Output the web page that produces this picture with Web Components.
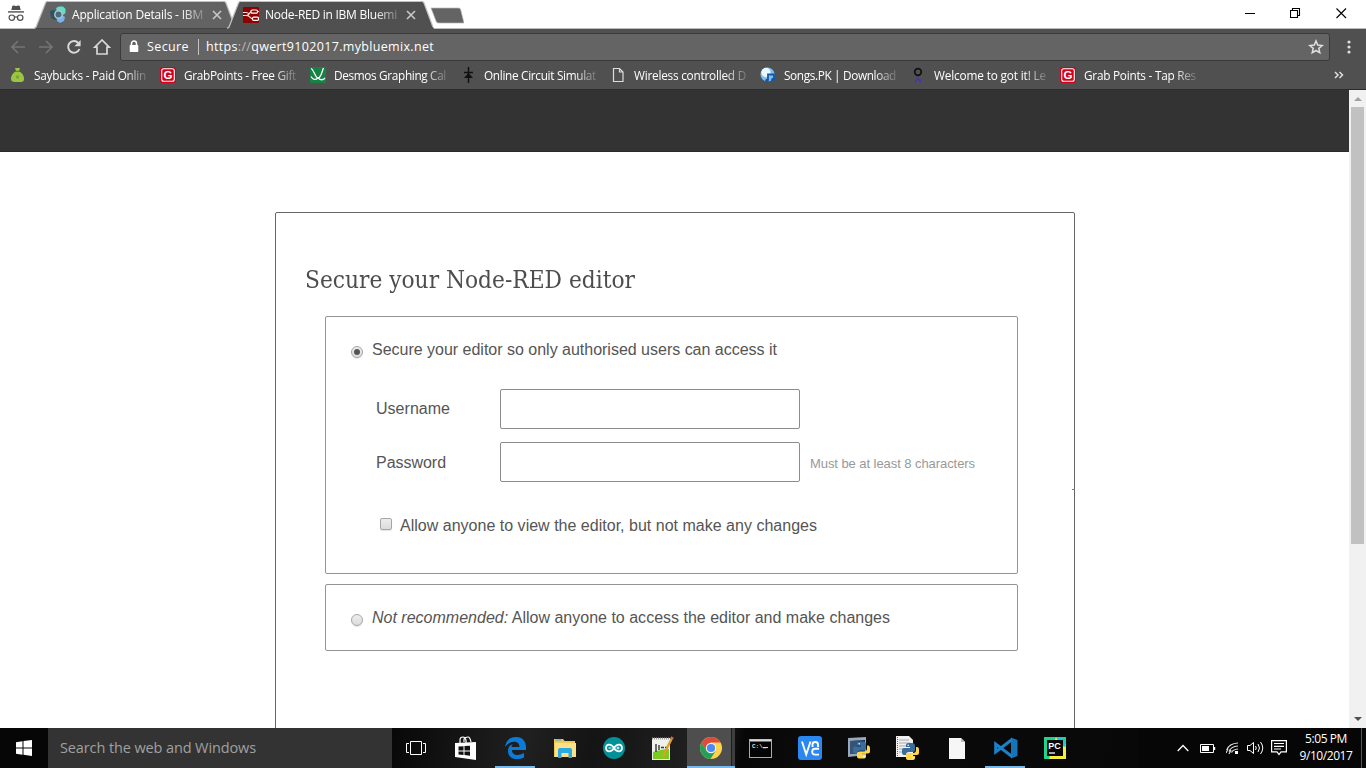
<!DOCTYPE html>
<html lang="en">
<head>
<meta charset="utf-8">
<title>Node-RED in IBM Bluemix</title>
<style>
html,body{margin:0;height:768px;overflow:hidden;background:#fff}
body{font-family:"Open Sans","Noto Sans",sans-serif}
</style>
</head>
<body>
<desktop-screen></desktop-screen>
<script>
const define = (name, html, setup) => customElements.define(name, class extends HTMLElement {
  connectedCallback() {
    if (this.shadowRoot) return;
    const root = this.attachShadow({mode: 'open'});
    root.innerHTML = typeof html === 'function' ? html(this) : html;
    if (setup) setup(this, root);
  }
});

/* Text set to a given width: by letter spacing, or by condensing the glyphs. */
define('fit-text', `<style>
:host{display:inline-block;white-space:pre}
span{display:inline-block;transform-origin:0 50%}
</style><span><slot></slot></span>`, (el, root) => {
  const s = root.querySelector('span');
  const want = +el.getAttribute('w');
  const have = s.getBoundingClientRect().width;
  if (!want || !have) return;
  if (el.hasAttribute('condense')) s.style.transform = `scaleX(${want / have})`;
  else s.style.letterSpacing = (want - have) / el.textContent.length + 'px';
  el.style.width = want + 'px';
});

const python = (x, y) => `<g transform="translate(${x} ${y})"><path d="M7 0h3q3 0 3 3v4q0 2-2 2H7q-3 0-3 3H2q-2 0-2-3V7q0-2 2-2h6V4H4V2q0-2 3-2z" fill="#3a6d9c"/><path d="M14 4h1q2 0 2 3v3q0 2-2 2H9v1h4v2q0 2-3 2H7q-3 0-3-2v-3q0-2 3-2h4q3 0 3-3z" fill="#ffd84a"/><circle cx="6.2" cy="2.2" r=".8" fill="#fff"/><circle cx="11" cy="15" r=".8" fill="#fff"/></g>`;
const grab = `<rect width="16" height="16" rx="2.5" fill="#d0021b"/><rect x="1.7" y="1.7" width="12.6" height="12.6" rx="2" fill="none" stroke="#fff" stroke-width="1.1"/><text x="8" y="12.2" text-anchor="middle" font-family="Liberation Sans,sans-serif" font-weight="bold" font-size="11.5" fill="#fff">G</text>`;
const ICONS = {
  incognito: [18, 18, `<path d="M5.200 2.200q.4-1 1.300-.7l2.500.6 2.500-.6q.9-.3 1.300.7L13.700 6H4.300z" fill="#505050"/><path d="M1 7.200h16v1.400H1z" fill="#505050"/><g fill="none" stroke="#505050" stroke-width="1.200"><circle cx="4.800" cy="13.700" r="2.700"/><circle cx="13.200" cy="13.700" r="2.700"/><path d="M7.500 13.300q1.500-1 3 0"/></g>`],
  bluemix: [16, 17, `<path d="M6 2 9 .5h4L15.500 3v4L13 9 8 8z" fill="#62dcc4"/><path d="m7 10 5-1 3 2-1 4-4 2-3-2z" fill="#70b4f4"/><path d="m0 5 4-1 4 3v5l-3 2-4-2z" fill="#2f5361"/><circle cx="8.500" cy="8.500" r="3.700" fill="#4c6975" stroke="#a9c8da" stroke-width="1.500"/>`],
  nodered: [16, 16, `<rect width="16" height="16" rx="1" fill="#8f0000"/><path d="M0 8.500h3.500C7 8.500 6 4.500 9 4.500M3.500 8.500c4 0 3.500 3.500 6.500 3.500M0 5.500h3q2 0 3 1.500M14 4.500h2" fill="none" stroke="#f3dede" stroke-width="1.200"/><g fill="#8f0000" stroke="#fff" stroke-width="1.200"><rect x="8" y="3" width="6.500" height="3.200" rx="1.200"/><rect x="9.500" y="10.200" width="6" height="3.200" rx="1.200"/></g>`],
  close: [10, 10, `<path d="m1 1 8 8M9 1 1 9" stroke="#c8c8c8" stroke-width="1.600"/>`],
  back: [16, 14, `<path d="M15 7H2M8 1 2 7l6 6" fill="none" stroke="#747474" stroke-width="1.700"/>`],
  forward: [16, 14, `<path d="M1 7h13M8 1l6 6-6 6" fill="none" stroke="#747474" stroke-width="1.700"/>`],
  reload: [16, 16, `<path d="M13.400 10A5.800 5.800 0 1 1 12.300 4" fill="none" stroke="#d8d8d8" stroke-width="2"/><path d="M14.600 1v6.200H8.400z" fill="#d8d8d8"/>`],
  home: [18, 18, `<path d="M9 2 1.800 9.200H4V16h10V9.200h2.200z" fill="none" stroke="#d8d8d8" stroke-width="1.700"/>`],
  lock: [10, 13, `<path d="M2.500 6V3.600a2.500 2.500 0 0 1 5 0V6" fill="none" stroke="#fff" stroke-width="1.500"/><rect x=".7" y="5" width="8.600" height="7" rx=".7" fill="#fff"/>`],
  star: [16, 16, `<path d="m8 2 1.700 4.100 4.500.4-3.400 2.900 1 4.400L8 11.500l-3.800 2.300 1-4.400-3.400-2.900 4.500-.4z" fill="none" stroke="#e0e0e0" stroke-width="1.500"/>`],
  dots: [4, 14, `<g fill="#dedede"><circle cx="2" cy="2" r="1.600"/><circle cx="2" cy="7" r="1.600"/><circle cx="2" cy="12" r="1.600"/></g>`],
  more: [10, 8, `<path d="m1 1 3 3-3 3M5.500 1l3 3-3 3" fill="none" stroke="#dedede" stroke-width="1.500"/>`],
  min: [11, 11, `<path d="M1 5.500h10" stroke="#000"/>`],
  restore: [11, 11, `<path d="M2.500 2.500v-2h7v7h-2M.5 2.500h7v7h-7z" fill="none" stroke="#000" stroke-width="1.100"/>`],
  exit: [11, 11, `<path d="m.5.5 9.500 9.500M10 .5.500 10" stroke="#000" stroke-width="1.100"/>`],
  bag: [16, 16, `<path d="M5 1h5L9 4q5 3 5 8 0 3-3 3H5q-4 0-4-3 0-5 5-8z" fill="#9bc642"/><path d="M5 4.300h5" stroke="#58751e"/><circle cx="7.500" cy="10" r="1.800" fill="#7fa52e"/>`],
  grab: [16, 16, grab],
  desmos: [16, 16, `<rect width="16" height="16" rx="1" fill="#168243"/><path d="M1 1.500c3 1 4 9.500 7 9.500s4-7 5.500-10M1 9.500q3 5 7 1.500 4 3.500 7 0" fill="none" stroke="#fff" stroke-width="1.300"/>`],
  diode: [16, 16, `<path d="M8.500 0v16M4 5.500h9" stroke="#111" stroke-width="1.500"/><path d="m8.500 6 4.500 5H4z" fill="#111"/>`],
  page: [16, 16, `<path d="M3.500 1.500h6l3.500 3.500v9.500H3.500zM9.500 1.500V5H13" fill="none" stroke="#ddd" stroke-width="1.200"/>`],
  songs: [16, 16, `<circle cx="7.500" cy="7.500" r="7" fill="#7fbdf0"/><circle cx="6" cy="5.500" r="4.700" fill="#eaf7ff"/><path d="M8 13V7.500h6V12" fill="none" stroke="#1459a8" stroke-width="1.800"/><circle cx="7" cy="13.500" r="1.800" fill="#1459a8"/><circle cx="13" cy="12.500" r="1.800" fill="#1459a8"/>`],
  gotit: [16, 16, `<circle cx="8" cy="5" r="3.300" fill="none" stroke="#111" stroke-width="1.700"/><path d="m5 15 3-3.500 3 3.500" fill="none" stroke="#4430c4" stroke-width="1.700"/>`],
  up: [8, 4, `<path d="M4 0 8 4H0z" fill="#a3a3a3"/>`],
  down: [8, 4, `<path d="M0 0h8L4 4z" fill="#505050"/>`],
  windows: [16, 16, `<path d="M0 2.200 6.500 1.300v6.200H0zM7.500 1.100 16 0v7.500H7.500zM0 8.500h6.500v6.200L0 13.800zM7.500 8.500H16V16l-8.500-1.200z" fill="#fff"/>`],
  tasks: [20, 14, `<path d="M4.500.5h11v13h-11zM3 2.500H.5v9H3M17 2.500h2.500v9H17" fill="none" stroke="#fff"/>`],
  store: [22, 24, `<path d="m0 7 21-1v18L0 21z" fill="#fff"/><path d="M5 7V4q0-3 3-3 2 0 3 3v3M9 6V3q1-2 4-2 2 0 3 5" fill="none" stroke="#fff" stroke-width="1.200"/><path d="m3.500 10.500 5-.3v4.200h-5zM9.500 10.100l5.500-.3v4.600H9.500zM3.500 15.400h5V19l-5-.5zM9.500 15.400H15v4.300l-5.500-.6z" fill="#111"/>`],
  edge: [21, 22, `<path d="M0 10C1 3 5 0 11 0c7 0 10 5 10 10v3H7c0 6 7 6 12 3v4.500C12 24 3 22 3 14c0-4 2-6 5-7-1 1-1.500 2-1.500 3h8c0-7-10-7-14.500 0z" fill="#0c7bd8"/>`],
  folder: [22, 20, `<path d="M0 1h9l1.500 2H21v16H0z" fill="#f3c956"/><path d="M1 5h21v14H1z" fill="#fce18a"/><path d="M1.500 2h6" stroke="#38aee2"/><path d="M4 12q0-2 2-2h10q2 0 2 2v8h-3.500v-5h-7v5H4z" fill="#29abe2"/>`],
  arduino: [24, 24, `<circle cx="12" cy="12" r="11" fill="#009297"/><path d="M12 12C9 7 4 8 4 12s5 5 8 0 8-4 8 0-5 5-8 0z" fill="none" stroke="#fff" stroke-width="1.700"/><path d="M6.500 12h3M14.500 12h3M16 10.500v3" stroke="#fff"/>`],
  notepp: [23, 25, `<path d="M1 2h18v22H1z" fill="#f0f0ea"/><path d="M2 16q9-3 16-3v10H2z" fill="#79cd21"/><path d="M1 2.500h18" stroke="#999" stroke-dasharray="1 1" stroke-width="2"/><path d="M5 8v8M8 9v5M10 11.500h3M14 11.500h2" stroke="#333" stroke-width="1.400"/><path d="m21 2-7.500 15-1 4" fill="none" stroke="#dda02b" stroke-width="2.400"/><path d="m20.500 3 1-2" stroke="#c56a4b" stroke-width="3"/>`],
  chrome: [22, 22, `<circle cx="11" cy="11" r="11" fill="#ffd34b"/><path d="M1.500 5.500A11 11 0 0 1 20.500 5.500H11L6.200 13.700z" fill="#dd4b3e"/><path d="M1.500 5.500A11 11 0 0 0 10.500 22L15.500 14 6.300 13.700z" fill="#22a05b"/><circle cx="11" cy="11" r="5.200" fill="#f1f1f1"/><circle cx="11" cy="11" r="4.100" fill="#4a8af4"/>`],
  cmd: [23, 19, `<rect x=".5" y=".5" width="22" height="18" fill="#050505" stroke="#aaa"/><path d="M1 1.500h21" stroke="#ddd" stroke-width="2"/><text x="3" y="8.500" font-family="Liberation Mono,monospace" font-size="6" font-weight="bold" fill="#ddd">C:\\_</text><path d="M14 8.500h5" stroke="#ddd"/>`],
  vnc: [24, 24, `<rect width="24" height="24" rx="3" fill="#2b87f2"/><path d="m4 5.500 4.200 13 4.300-13M14.500 11V8.500Q14.500 6 17.200 6T20 8.500V11M21 12.800h-4q-2.800 0-2.800 2.900t2.800 2.900h4" fill="none" stroke="#fff" stroke-width="1.900"/>`],
  idle: [22, 22, `<path d="M0 1 18 0v18L0 20z" fill="#9aa9ba"/><path d="m2 4 15-1v13L2 17z" fill="#153260"/><path d="m2 4 9-.5L6 17H2z" fill="#365477"/>${python(5, 4.500)}`],
  pyfile: [23, 24, `<path d="M0 0h13l4 4v17H0z" fill="#f1f1f1"/><path d="M3 4h10M3 7h11M3 10h8M3 13h8M3 16h7" stroke="#aaa"/><path d="M1.500 1v19" stroke="#666" stroke-dasharray="1 1"/>${python(6, 7)}`],
  file: [16, 21, `<path d="M0 0h12l4 4v17H0z" fill="#f6f6f6"/><path d="M12 0v4h4" fill="#bbb"/>`],
  vscode: [24, 24, `<path d="M17 1.500 23.500 4v16L17 22.500z" fill="#1673b8"/><path d="M18 3.500 1.700 16V8L18 20.500" fill="none" stroke="#1883cb" stroke-width="3"/>`],
  pycharm: [22, 22, `<path d="M0 0h22v22H0z" fill="#20d58b"/><path d="m12 0 10 8v14H5z" fill="#f6ee43"/><path d="m12 0 8 2 2 8-6-2z" fill="#20c5df"/><path d="M3 3h16v16H3z" fill="#080808"/><text x="4.300" y="11.500" font-family="Liberation Sans,sans-serif" font-weight="bold" font-size="9" fill="#fff">PC</text><path d="M5 16h6" stroke="#fff" stroke-width="1.300"/>`],
  chevron: [12, 8, `<path d="m.7 7 5.300-5.500L11.300 7" fill="none" stroke="#fff" stroke-width="1.300"/>`],
  battery: [16, 9, `<path d="M.5.5h13v8H.5z" fill="none" stroke="#fff"/><path d="M2 2h7v5H2zM14 3h1.200v3H14z" fill="#fff"/>`],
  wifi: [14, 12, `<g fill="none" stroke="#ddd" stroke-width="1.200"><path d="M.7 8Q3 1.500 12 1M3 9.500Q5 4.500 12 4M5.500 10.500Q7 7.500 12 7M0 11l2-4M3 12l2-4"/></g><path d="M9 9h3v3H9z" fill="#fff"/>`],
  sound: [18, 14, `<path d="M.5 4.500h2.500l3.500-3v11l-3.500-3H.5zM8.500 5q1.500 2 0 4M11 3q3 4 0 8M13.500 1q4.500 6 0 12" fill="none" stroke="#fff"/>`],
  action: [16, 16, `<path d="M.6.6h14.800v11.300H10L8 14.500 6 11.900H.6zM3 3.500h10M3 6.300h10M3 9h7" fill="none" stroke="#fff" stroke-width="1.200"/>`]
};
define('ui-icon', el => {
  const [w, h, body] = ICONS[el.getAttribute('name')];
  return `<style>:host{display:block;flex:none;width:${w}px;height:${h}px}svg{display:block}</style><svg width="${w}" height="${h}" viewBox="0 0 ${w} ${h}">${body}</svg>`;
});

define('browser-tab', el => {
  const active = el.hasAttribute('active'), w = active ? 207 : 202;
  return `<style>
  :host{display:block;position:relative;flex:none;width:${w}px;height:29px;color:#fff;font-size:12px;line-height:16px}
  .shape{position:absolute;left:0;top:0}
  .row{position:relative;display:flex;align-items:center;height:29px;padding-left:${active ? 16 : 16}px}
  .title{width:${active ? 134 : 133}px;margin-left:6px;overflow:hidden;-webkit-mask-image:linear-gradient(90deg,#000 82%,rgba(0,0,0,.2));height:16px}
  ui-icon[name=close]{margin-left:${active ? 7 : 7}px}
  </style><svg class="shape" width="${w}" height="29"><path d="M0 29 2 27 11.500 3Q12.500 1 14 1H${w - 13}Q${w - 11} 1 ${w - 10} 3L${w - 2} 25 ${w} 29z" fill="${active ? '#505050' : '#636363'}"/><path d="M0 28.500 2 27 11.500 3Q12.500 1 14 1.500H${w - 13}Q${w - 11} 1 ${w - 10} 3L${w - 1} 27" fill="none" stroke="#bfc3bf" stroke-width="1.200"/>${active ? '' : `<path d="M2 28.500H${w}" stroke="#454545"/>`}</svg>
  <div class="row"><ui-icon name="${el.getAttribute('icon')}"></ui-icon><div class="title"><fit-text w="${el.getAttribute('w')}">${el.getAttribute('label')}</fit-text></div><ui-icon name="close"></ui-icon></div>`;
});

define('tab-strip', `<style>
:host{display:flex;height:29px;background:linear-gradient(#fff 28px,#b9bdb9 28px)}
.inc{padding:4px 9px 0 7px}
browser-tab[active]{margin-left:-9px}
.new{margin:7px 0 0 -4px;flex:none}
.win{margin-left:auto;display:flex;padding:8px 19px 0 0;gap:35px}
</style>
<div class="inc"><ui-icon name="incognito"></ui-icon></div>
<browser-tab icon="bluemix" label="Application Details - IBM" w="131"></browser-tab>
<browser-tab active icon="nodered" label="Node-RED in IBM Bluemi" w="132"></browser-tab>
<svg class="new" width="34" height="18"><path d="M1 1h27q2 0 2.500 1L34 16H9q-2 0-2.600-1z" fill="#646464" stroke="#b8bbb8" stroke-width=".7"/></svg>
<div class="win"><ui-icon name="min"></ui-icon><ui-icon name="restore"></ui-icon><ui-icon name="exit"></ui-icon></div>`);

define('address-bar', `<style>
:host{display:flex;align-items:center;height:35px;background:#505050;color:#fff;font-size:12.500px;padding-left:10px;box-sizing:border-box}
.nav{display:flex;align-items:center;width:110px;flex:none}
.box{display:flex;align-items:center;width:1210px;height:28px;box-sizing:border-box;border:1px solid #3a3a3a;border-radius:3px;background:#646464;padding:0 5px 0 8px;line-height:18px}
.sep{width:1px;height:16px;background:#c4c4c4;margin:0 7px 0 9px}
i{font-style:normal;color:#bbb}
ui-icon[name=star]{margin-left:auto}
</style>
<div class="nav"><ui-icon name="back"></ui-icon><ui-icon name="forward" style="margin-left:12px"></ui-icon><ui-icon name="reload" style="margin-left:12px"></ui-icon><ui-icon name="home" style="margin-left:11px"></ui-icon></div>
<div class="box"><ui-icon name="lock"></ui-icon><fit-text w="42" style="margin-left:8px">Secure</fit-text><span class="sep"></span><fit-text w="228">https<i>://</i>qwert9102017.mybluemix.net</fit-text><ui-icon name="star"></ui-icon></div>
<ui-icon name="dots" style="margin-left:17px"></ui-icon>`);

define('book-mark', el => `<style>
:host{display:flex;align-items:center;width:150px;flex:none;height:22px;gap:8px;box-sizing:border-box;padding-left:10px;color:#fff;font-size:11.800px;line-height:16px}
div{width:113px;flex:none;overflow:hidden;height:16px;-webkit-mask-image:linear-gradient(90deg,#000 80%,rgba(0,0,0,.15))}
</style><ui-icon name="${el.getAttribute('icon')}"></ui-icon><div><fit-text w="112">${el.textContent}</fit-text></div>`);

define('bookmarks-bar', `<style>
:host{display:flex;align-items:center;height:26px;background:#505050;border-bottom:1px solid #2b2b2b;box-sizing:border-box;padding-bottom:3px}
</style>
<book-mark icon="bag">Saybucks - Paid Onlin</book-mark><book-mark icon="grab">GrabPoints - Free Gift</book-mark><book-mark icon="desmos">Desmos Graphing Cal</book-mark><book-mark icon="diode">Online Circuit Simulat</book-mark><book-mark icon="page">Wireless controlled D</book-mark><book-mark icon="songs">Songs.PK | Download</book-mark><book-mark icon="gotit">Welcome to got it! Le</book-mark><book-mark icon="grab">Grab Points - Tap Res</book-mark>
<ui-icon name="more" style="margin-left:134px"></ui-icon>`);

define('choice-mark', el => {
  const r = el.getAttribute('type') === 'radio';
  return `<style>:host{display:block;flex:none;width:12px;height:12px;box-sizing:border-box;border:1px solid #a6a6a6;border-radius:${r ? '50%' : '2px'};background:linear-gradient(#ededed,#dcdcdc);box-shadow:0 1px 1px rgba(0,0,0,.1)}
  b{display:block;width:6px;height:6px;margin:2px;border-radius:50%;background:#555}</style>${el.hasAttribute('checked') ? '<b></b>' : ''}`;
});

define('form-field', `<style>
:host{display:flex;align-items:center;height:40px}
.label{width:124px}
:host([low]) .label{padding-top:2px}
.input{width:300px;height:40px;box-sizing:border-box;border:1px solid #8c8c8c;border-radius:2px;background:#fff}
.hint{margin-left:10px;font-size:13px;color:#999;padding-top:3px}
</style><div class="label"><slot></slot></div><div class="input"></div><div class="hint"><slot name="hint"></slot></div>`);

define('option-box', `<style>
:host{display:block;box-sizing:border-box;width:693px;border:1px solid #949494;border-radius:2px;padding-left:25px}
.head{display:flex;align-items:flex-start;gap:9px;line-height:20px}
</style><div class="head"><slot name="mark"></slot><slot name="title"></slot></div><slot></slot>`);

define('secure-page', `<style>
:host{display:block;flex:1;height:638px;overflow:hidden;background:#fff;color:#555;font:16px/20px "Liberation Sans",Arial,sans-serif}
.top{height:62px;background:#333;box-sizing:border-box;border-bottom:1px solid #2a2a2a}
.card{position:relative;width:800px;height:560px;margin:60px 0 0 275px;box-sizing:border-box;border:1px solid #666;border-radius:2px;padding:50px 0 0 49px}
h1{margin:0 0 19px -20px;height:34px;font:400 24px/34px "DejaVu Serif",serif;color:#4d4d4d}
choice-mark[type=radio]{margin-top:6px}
.one{height:258px;padding-top:23px}
.two{height:67px;padding-top:23px;margin-top:10px}
.fields{display:flex;flex-direction:column;gap:13px;padding:29px 0 0 25px}
.allow{display:flex;align-items:center;gap:8px;padding:34px 0 0 29px}
.allow choice-mark{margin-top:-5px}
.speck{position:absolute;right:-1px;top:276px;width:3px;height:1px;background:#777}
</style>
<div class="top"></div>
<div class="card">
<h1><fit-text condense w="330">Secure your Node-RED editor</fit-text></h1>
<option-box class="one"><choice-mark slot="mark" type="radio" checked></choice-mark><fit-text slot="title" w="405">Secure your editor so only authorised users can access it</fit-text>
<div class="fields"><form-field><fit-text w="74">Username</fit-text></form-field><form-field low><fit-text w="70">Password</fit-text><fit-text slot="hint" w="165">Must be at least 8 characters</fit-text></form-field></div>
<div class="allow"><choice-mark type="checkbox"></choice-mark><fit-text w="417">Allow anyone to view the editor, but not make any changes</fit-text></div></option-box>
<option-box class="two"><choice-mark slot="mark" type="radio"></choice-mark><fit-text slot="title" w="518"><em>Not recommended:</em> Allow anyone to access the editor and make changes</fit-text></option-box>
<span class="speck"></span>
</div>`);

define('scroll-bar', `<style>
:host{display:flex;flex-direction:column;align-items:center;width:17px;height:638px;flex:none;background:#f1f1f1}
.thumb{width:13px;height:437px;margin-top:6px;background:#c1c1c1}
ui-icon[name=up]{margin-top:7px}ui-icon[name=down]{margin:auto 0 7px}
</style><ui-icon name="up"></ui-icon><div class="thumb"></div><ui-icon name="down"></ui-icon>`);

define('task-item', el => `<style>
:host{display:flex;flex:none;width:49px;height:40px;align-items:center;justify-content:center;position:relative;box-sizing:border-box}
:host([open])::after{content:"";position:absolute;left:4px;width:40px;bottom:0;height:2px;background:#76b9ed}
:host([current]){background:linear-gradient(90deg,#4e4e4e 44px,#1c1c1c 44px 45px,#3e3e3e 45px)}
:host([current])::after{left:0;width:48px}
</style><ui-icon name="${el.getAttribute('icon')}"></ui-icon>`);

define('task-bar', `<style>
:host{display:flex;height:40px;background:#060606;color:#fff}
.start{width:48px;display:flex;align-items:center;justify-content:center}
.search{width:344px;background:#333;color:#a0a0a0;font-size:14.500px;line-height:40px;padding-left:12px;box-sizing:border-box}
.apps{display:flex;width:746px;background:linear-gradient(100deg,#080808,#202020 18%,#141414 27%,#222 43%,#070707 47%,#0b0b0b 56%,#080808)}
.apps task-item:nth-child(1){width:50px;padding-right:2px}
.apps task-item:nth-child(2){padding-right:2px}
.apps task-item[current]{width:48px;margin-right:1px}
.tray{display:flex;align-items:center;margin-left:39px}
.clock{width:54px;margin-left:12px;font-size:12px;line-height:17px;text-align:center;display:flex;flex-direction:column;align-items:center;margin-top:-3px}
.peek{margin-left:auto;width:1px;height:40px;margin-right:4px;background:#555}
</style>
<div class="start"><ui-icon name="windows"></ui-icon></div>
<div class="search"><fit-text w="196">Search the web and Windows</fit-text></div>
<div class="apps"><task-item icon="tasks"></task-item><task-item icon="store"></task-item><task-item icon="edge" open></task-item><task-item icon="folder"></task-item><task-item icon="arduino"></task-item><task-item icon="notepp"></task-item><task-item icon="chrome" open current></task-item><task-item icon="cmd"></task-item><task-item icon="vnc"></task-item><task-item icon="idle"></task-item><task-item icon="pyfile"></task-item><task-item icon="file"></task-item><task-item icon="vscode" open></task-item><task-item icon="pycharm"></task-item></div>
<div class="tray"><ui-icon name="chevron"></ui-icon><ui-icon name="battery" style="margin-left:11px"></ui-icon><ui-icon name="wifi" style="margin-left:10px"></ui-icon><ui-icon name="sound" style="margin-left:7px"></ui-icon><ui-icon name="action" style="margin-left:6px"></ui-icon>
<div class="clock"><fit-text w="42">5:05 PM</fit-text><fit-text w="53">9/10/2017</fit-text></div></div>
<div class="peek"></div>`);

define('desktop-screen', `<style>
:host{display:flex;flex-direction:column;width:1366px;height:768px;overflow:hidden}
.view{display:flex;height:638px}
</style><tab-strip></tab-strip><address-bar></address-bar><bookmarks-bar></bookmarks-bar>
<div class="view"><secure-page></secure-page><scroll-bar></scroll-bar></div><task-bar></task-bar>`);
</script>
</body>
</html>
